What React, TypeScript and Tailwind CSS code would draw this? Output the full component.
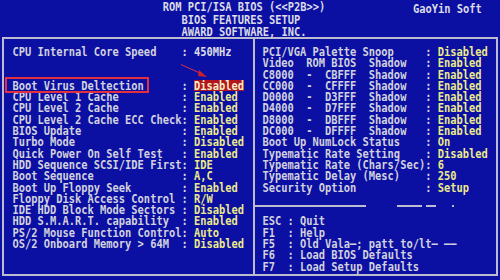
import React from 'react';

type Tone = 'label' | 'value' | 'plain' | 'hl';

function T({ children, tone = 'label' }: { children: React.ReactNode; tone?: Tone }) {
  const color =
    tone === 'value'
      ? 'text-[#ecea8a]'
      : tone === 'hl'
        ? 'text-[#f4eec8] bg-[#b3141e]'
        : tone === 'plain'
          ? 'text-[#dcdce6]'
          : 'text-[#d2d2de]';
  return (
    <span className={`inline-block h-full whitespace-pre ${color}`}>
      <span className="inline-block scale-y-[1.2] leading-[9px]">{children}</span>
    </span>
  );
}

function Row({ label, value, side, tone = 'value' }: { label: string; value?: string; side: 'l' | 'r'; tone?: Tone }) {
  return (
    <div className="flex h-[11.3px] items-center leading-[11.3px]">
      <span className={side === 'l' ? 'w-[27ch]' : 'w-[26ch]'}>
        <T>{label}</T>
      </span>
      {value !== undefined && (
        <>
          <T>{': '}</T>
          <T tone={tone}>{value}</T>
        </>
      )}
    </div>
  );
}

function Blank() {
  return <div className="h-[11.3px]" />;
}

const left: [string, string][] = [
  ['CPU Level 1 Cache', 'Enabled'],
  ['CPU Level 2 Cache', 'Enabled'],
  ['CPU Level 2 Cache ECC Check', 'Enabled'],
  ['BIOS Update', 'Enabled'],
  ['Turbo Mode', 'Disabled'],
  ['Quick Power On Self Test', 'Enabled'],
  ['HDD Sequence SCSI/IDE First', 'IDE'],
  ['Boot Sequence', 'A,C'],
  ['Boot Up Floppy Seek', 'Enabled'],
  ['Floppy Disk Access Control', 'R/W'],
  ['IDE HDD Block Mode Sectors', 'Disabled'],
  ['HDD S.M.A.R.T. capability', 'Enabled'],
  ['PS/2 Mouse Function Control', 'Auto'],
  ['OS/2 Onboard Memory > 64M', 'Disabled'],
];

const right: [string, string][] = [
  ['PCI/VGA Palette Snoop', 'Disabled'],
  ['Video  ROM BIOS  Shadow', 'Enabled'],
  ['C8000  -  CBFFF  Shadow', 'Enabled'],
  ['CC000  -  CFFFF  Shadow', 'Enabled'],
  ['D0000  -  D3FFF  Shadow', 'Enabled'],
  ['D4000  -  D7FFF  Shadow', 'Enabled'],
  ['D8000  -  DBFFF  Shadow', 'Enabled'],
  ['DC000  -  DFFFF  Shadow', 'Enabled'],
  ['Boot Up NumLock Status', 'On'],
  ['Typematic Rate Setting', 'Disabled'],
  ['Typematic Rate (Chars/Sec)', '6'],
  ['Typematic Delay (Mesc)', '250'],
  ['Security Option', 'Setup'],
];

const keys: [string, string][] = [
  ['ESC', 'Quit'],
  ['F1 ', 'Help'],
  ['F5 ', 'Old Vala\u2014; patt to/lt\u2014 \u2014\u2014'],
  ['F6 ', 'Load BIOS Defaults'],
  ['F7 ', 'Load Setup Defaults'],
];

export default function App() {
  return (
    <div className="relative h-[280px] w-[500px] overflow-hidden bg-[#0b10a3] font-['DejaVu_Sans_Mono','Liberation_Mono',monospace] text-[10.4px] font-bold">
      {/* Header */}
      <div className="mt-[1px] flex h-[11.3px] items-center">
        <span className="pl-[26ch] w-[66ch]"><T tone="plain">ROM PCI/ISA BIOS (&lt;&lt;P2B&gt;&gt;)</T></span>
        <T tone="plain">GaoYin Soft</T>
      </div>
      <div className="flex h-[11.3px] items-center pl-[29ch]"><T tone="plain">BIOS FEATURES SETUP</T></div>
      <div className="flex h-[11.3px] items-center pl-[29ch]"><T tone="plain">AWARD SOFTWARE, INC.</T></div>

      {/* Main box */}
      <div className="ml-[2px] mt-[2.6px] flex h-[238.5px] w-[496px] border-2 border-[#bcbcd0]">
        <div className="w-[248.5px] pl-[8.5px] pt-[6.5px]">
          <Row side="l" label="CPU Internal Core Speed" value="450MHz" tone="plain" />
          <Blank />
          <Blank />
          <Row side="l" label="Boot Virus Deltection" value="Disabled" tone="hl" />
          {left.map(([l, v]) => (
            <Row key={l} side="l" label={l} value={v} />
          ))}
        </div>
        <div className="flex flex-1 flex-col border-l-2 border-[#bcbcd0]">
          <div className="h-[165.7px] pl-[8px] pt-[6.5px]">
            {right.map(([l, v]) => (
              <Row key={l} side="r" label={l} value={v} />
            ))}
          </div>
          {/* divider, partly rubbed out in the original */}
          <div className="flex h-[2px] items-center">
            <div className="h-[2px] w-[111px] bg-[#bcbcd0]" />
            <div className="ml-[31px] h-[2px] w-[25px] bg-[#bcbcd0]" />
            <div className="ml-[4px] h-[2px] w-[10px] bg-[#bcbcd0]" />
            <div className="ml-[16px] h-[2px] w-[2px] bg-[#bcbcd0]" />
          </div>
          <div className="pl-[8px] pt-[6.3px]">
            {keys.map(([k, v]) => (
              <div key={k} className="flex h-[11.3px] items-center">
                <T>{k + ' : '}</T>
                <T>{v}</T>
              </div>
            ))}
          </div>
        </div>
      </div>

      {/* Annotation: red frame + arrow */}
      <div className="absolute left-[5px] top-[76.5px] h-[16px] w-[144px] border-2 border-[#e2303e]" />
      <svg className="absolute left-0 top-0" width="500" height="280">
        <line x1="181" y1="64.5" x2="202" y2="74" stroke="#d8304c" strokeWidth="1" />
        <polygon points="199,70 207,77 198,76" fill="#c8202c" />
      </svg>
    </div>
  );
}
